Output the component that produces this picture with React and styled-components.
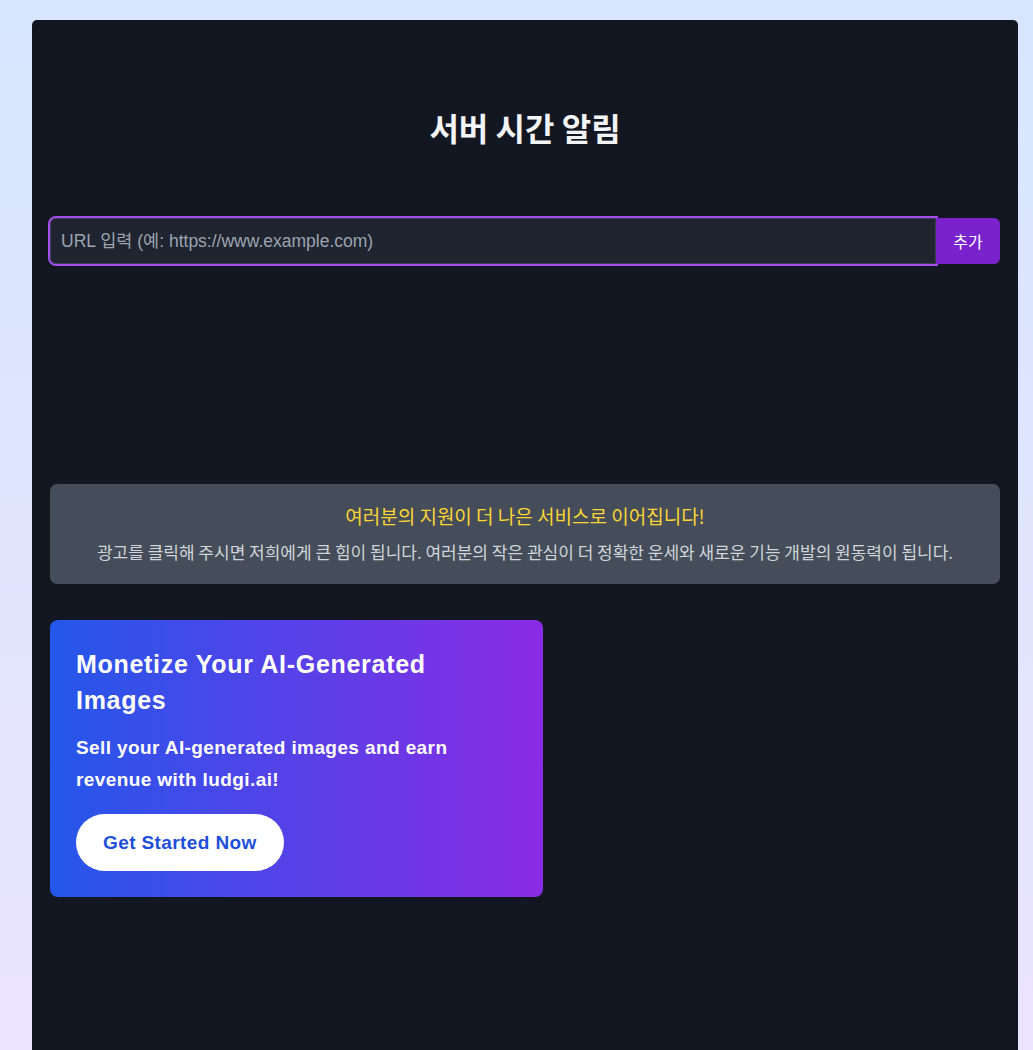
import React from 'react'
import styled, { createGlobalStyle } from 'styled-components'

const GlobalStyle = createGlobalStyle`
  html, body {
    margin: 0;
    padding: 0;
  }
  body {
    min-height: 1050px;
    background: linear-gradient(180deg, #d6e6fe 0%, #ebe4fe 100%);
    font-family: "Noto Sans CJK KR", "Noto Sans", sans-serif;
  }
`;

export default function App() {
  return (
    <>
      <GlobalStyle />
      <Page>
        <Panel>
          <Title>서버 시간 알림</Title>
          <UrlForm onSubmit={e => e.preventDefault()}>
            <UrlInput placeholder="URL 입력 (예: https://www.example.com)" />
            <AddButton type="submit">추가</AddButton>
          </UrlForm>
          <ServerList />
          <Notice>
            <NoticeTitle>여러분의 지원이 더 나은 서비스로 이어집니다!</NoticeTitle>
            <NoticeText>
              광고를 클릭해 주시면 저희에게 큰 힘이 됩니다. 여러분의 작은 관심이 더 정확한 운세와 새로운 기능 개발의 원동력이 됩니다.
            </NoticeText>
          </Notice>
          <AdCard>
            <AdTitle>Monetize Your AI-Generated Images</AdTitle>
            <AdText>Sell your AI-generated images and earn revenue with ludgi.ai!</AdText>
            <AdButton>Get Started Now</AdButton>
          </AdCard>
        </Panel>
      </Page>
    </>
  )
};

const Page = styled.div`
  padding: 20px 15px 0 32px;
  height: 1030px;
  overflow: hidden;
`;

const Panel = styled.div`
  background: #131722;
  border-radius: 5px 5px 0 0;
  padding: 85px 18px 0;
  height: 100%;
  box-sizing: border-box;
`;

const Title = styled.h1`
  margin: 0 0 69px;
  text-align: center;
  color: #f3f4f6;
  font-size: 32px;
  line-height: 44px;
  font-weight: 700;
`;

const UrlForm = styled.form`
  display: flex;
  align-items: stretch;
  height: 46px;
`;

const UrlInput = styled.input`
  flex: 1;
  min-width: 0;
  box-sizing: border-box;
  background: #1f2430;
  border: 1px solid #374151;
  outline: 2px solid #a24ee8;
  border-radius: 6px 0 0 6px;
  padding: 0 10px;
  color: #e5e7eb;
  font-family: "Liberation Sans", "Noto Sans CJK KR", sans-serif;
  font-size: 17.5px;
  &::placeholder {
    color: #9ca3af;
  }
`;

const AddButton = styled.button`
  width: 64px;
  border: none;
  border-radius: 0 6px 6px 0;
  background: #7a22cc;
  color: #ffffff;
  font-family: "Noto Sans CJK KR", sans-serif;
  font-size: 16px;
`;

const ServerList = styled.div`
  height: 220px;
`;

const Notice = styled.div`
  background: #444d59;
  border-radius: 7px;
  padding: 18px 16px 20px;
  text-align: center;
`;

const NoticeTitle = styled.div`
  color: #fcd535;
  font-size: 19px;
  line-height: 28px;
  margin-bottom: 10px;
`;

const NoticeText = styled.div`
  color: #d1d5db;
  font-size: 17px;
  line-height: 24px;
`;

const AdCard = styled.div`
  margin-top: 36px;
  width: 493px;
  box-sizing: border-box;
  padding: 26px;
  border-radius: 8px;
  background: linear-gradient(90deg, #2457ea 0%, #8a2be4 100%);
  color: #ffffff;
  font-family: "Liberation Sans", Arial, sans-serif;
`;

const AdTitle = styled.h2`
  margin: 0 0 14px;
  font-size: 25px;
  letter-spacing: 0.7px;
  line-height: 36px;
  font-weight: 700;
  max-width: 420px;
`;

const AdText = styled.p`
  margin: 0 0 18px;
  font-size: 19px;
  letter-spacing: 0.4px;
  line-height: 32px;
  font-weight: 700;
  max-width: 420px;
`;

const AdButton = styled.button`
  height: 57px;
  padding: 0 27px;
  border: none;
  border-radius: 29px;
  background: #ffffff;
  color: #1d4fd8;
  font-family: "Liberation Sans", Arial, sans-serif;
  font-size: 19px;
  letter-spacing: 0.4px;
  font-weight: 700;
`;
